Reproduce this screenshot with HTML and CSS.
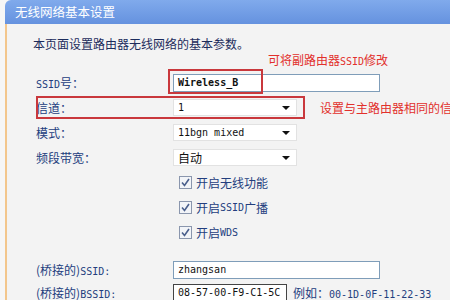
FILE: index.html
```html
<!DOCTYPE html>
<html lang="zh-CN">
<head>
<meta charset="UTF-8" />
<meta name="viewport" content="width=device-width, initial-scale=1" />
<title>无线网络基本设置</title>
<link rel="stylesheet" href="styles.css">
</head>
<body>
    <div class="frame">
        <div class="title">无线网络基本设置</div>
        <div class="content">
            <p class="intro">本页面设置路由器无线网络的基本参数。</p>
            <p class="note">可将副路由器<span class="en">SSID</span>修改</p>

            <div class="row">
                <label class="label"><span class="en">SSID</span>号：</label>
                <div class="field">
                    <div class="input wide bold">Wireless_B</div>
                    <div class="mark mark-ssid"></div>
                </div>
            </div>

            <div class="row channel">
                <label class="label">信道：</label>
                <div class="select"><span class="en">1</span><i class="arrow"></i></div>
                <span class="tip">设置与主路由器相同的信道</span>
                <div class="mark mark-channel"></div>
            </div>

            <div class="row">
                <label class="label">模式：</label>
                <div class="select"><span class="en">11bgn mixed</span><i class="arrow"></i></div>
            </div>

            <div class="row">
                <label class="label">频段带宽：</label>
                <div class="select"><span>自动</span><i class="arrow"></i></div>
            </div>

            <div class="checks">
                <div class="check"><span class="box"><svg width="9" height="9" viewBox="0 0 9 9"><path d="M1 4.5 L3.5 7.5 L8 1" fill="none" stroke="#4a5f8c" stroke-width="1.6"/></svg></span>开启无线功能</div>
                <div class="check"><span class="box"><svg width="9" height="9" viewBox="0 0 9 9"><path d="M1 4.5 L3.5 7.5 L8 1" fill="none" stroke="#4a5f8c" stroke-width="1.6"/></svg></span>开启<span class="en">SSID</span>广播</div>
                <div class="check"><span class="box"><svg width="9" height="9" viewBox="0 0 9 9"><path d="M1 4.5 L3.5 7.5 L8 1" fill="none" stroke="#4a5f8c" stroke-width="1.6"/></svg></span>开启<span class="en">WDS</span></div>
            </div>

            <div class="row bridge">
                <label class="label">(桥接的)<span class="en">SSID:</span></label>
                <div class="input wide">zhangsan</div>
            </div>

            <div class="row bridge">
                <label class="label">(桥接的)<span class="en">BSSID:</span></label>
                <div class="input short">08-57-00-F9-C1-5C</div>
                <span class="example">例如：<span class="en">00-1D-0F-11-22-33</span></span>
            </div>
        </div>
    </div>
</body>
</html>
```
FILE: styles.css
```css
body {
    margin: 0;
    width: 450px;
    height: 300px;
    overflow: hidden;
    background: #f6f6f6;
    font-family: "Noto Sans CJK SC", sans-serif;
    font-size: 12px;
    color: #233e7e;
}

.en {
    font-family: "DejaVu Sans Mono", "Liberation Mono", monospace;
    font-size: 10px;
}

.frame {
    margin-left: 5px;
}

.title {
    height: 24px;
    line-height: 24px;
    padding-left: 10px;
    font-size: 12.5px;
    color: #fff;
    background: linear-gradient(#80aaec, #6592df);
    border-top-left-radius: 6px;
}

.content {
    border-left: 2px solid #f3c68c;
    background: #f3f3f3;
    height: 276px;
}

.intro {
    margin: 0;
    padding: 12px 0 0 26px;
    line-height: 16px;
    color: #1c2c5c;
}

.note {
    margin: 0;
    padding-left: 261px;
    line-height: 16px;
    color: #e2302c;
}

.row {
    position: relative;
    display: flex;
    align-items: center;
    height: 25px;
    padding-left: 29px;
    white-space: nowrap;
}

.row > * {
    flex: none;
}

.label {
    width: 137px;
}

.field {
    position: relative;
}

.input {
    height: 16px;
    line-height: 16px;
    padding-left: 4px;
    border: 1px solid #7f9db9;
    background: #fff;
    color: #111;
    font-family: "DejaVu Sans Mono", "Liberation Mono", monospace;
    font-size: 10px;
    box-sizing: content-box;
}

.bold {
    font-weight: bold;
}

.wide {
    width: 201px;
}

.short {
    width: 108px;
    border-color: #444;
}

.select {
    display: flex;
    align-items: center;
    justify-content: space-between;
    width: 124px;
    height: 17px;
    padding: 0 6px 0 4px;
    background: #fff;
    border: 1px solid #e2e2e2;
    color: #111;
    box-sizing: border-box;
}

.arrow {
    width: 0;
    height: 0;
    border-left: 4px solid transparent;
    border-right: 4px solid transparent;
    border-top: 4px solid #111;
}

.tip {
    margin-left: 23px;
    color: #e2302c;
}

.mark {
    position: absolute;
    border: 2px solid #c9383c;
    pointer-events: none;
}

.mark-ssid {
    left: -5px;
    top: -5px;
    width: 91px;
    height: 21px;
}

.mark-channel {
    left: 29px;
    top: 1px;
    width: 265px;
    height: 19px;
}

.checks {
    padding-left: 172px;
}

.check {
    display: flex;
    align-items: center;
    height: 25px;
    color: #233e7e;
}

.box {
    display: flex;
    align-items: center;
    justify-content: center;
    width: 11px;
    height: 11px;
    margin-right: 4px;
    border: 1px solid #8a96ad;
    background: #f2f4f8;
}

.bridge {
    height: 23px;
}

.checks + .bridge {
    margin-top: 13px;
}

.example {
    margin-left: 6px;
}
```
